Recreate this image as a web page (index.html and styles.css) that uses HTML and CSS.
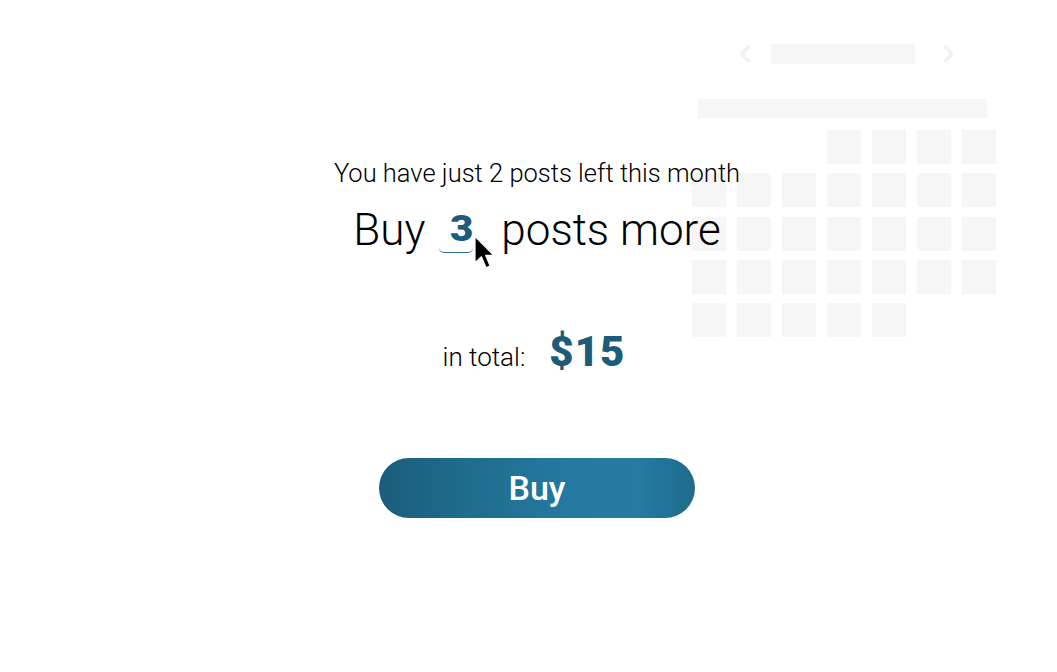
FILE: index.html
```html
<!DOCTYPE html>
<html lang="en">
<head>
<meta charset="utf-8">
<title>Buy posts</title>
<link rel="stylesheet" href="styles.css">
</head>
<body>
<div class="stage">
  <div class="calendar" aria-hidden="true">
    <div class="cal-head">
      <svg class="chev prev" viewBox="0 0 12 18" width="12" height="18"><path d="M9.5 2 L3 9 L9.5 16" fill="none" stroke="#f1f1f1" stroke-width="3.6" stroke-linecap="round" stroke-linejoin="round"/></svg>
      <div class="cal-title"></div>
      <svg class="chev next" viewBox="0 0 12 18" width="12" height="18"><path d="M2.5 2 L9 9 L2.5 16" fill="none" stroke="#f1f1f1" stroke-width="3.6" stroke-linecap="round" stroke-linejoin="round"/></svg>
    </div>
    <div class="cal-week"></div>
    <div class="cal-grid">
      <span class="cell start"></span><span class="cell"></span><span class="cell"></span><span class="cell"></span>
      <span class="cell"></span><span class="cell"></span><span class="cell"></span><span class="cell"></span><span class="cell"></span><span class="cell"></span><span class="cell"></span>
      <span class="cell"></span><span class="cell"></span><span class="cell"></span><span class="cell"></span><span class="cell"></span><span class="cell"></span><span class="cell"></span>
      <span class="cell"></span><span class="cell"></span><span class="cell"></span><span class="cell"></span><span class="cell"></span><span class="cell"></span><span class="cell"></span>
      <span class="cell"></span><span class="cell"></span><span class="cell"></span><span class="cell"></span><span class="cell"></span>
    </div>
  </div>

  <main class="offer">
    <p class="left">You have just 2 posts left this month</p>
    <p class="buy-line"><span>Buy</span><span class="qty"><span class="digit">3</span><svg class="pointer" viewBox="0 0 20 32" width="23" height="37"><path d="M1.5 1.5 V25.5 L7.2 20 L11.2 29.5 L15.2 27.8 L11.3 18.6 H18.5 Z" fill="#000" stroke="#fff" stroke-width="1.5" stroke-linejoin="round"/></svg></span><span>posts more</span></p>
    <div class="total"><span class="label">in total:</span><span class="price">$15</span></div>
    <button class="buy-btn" type="button">Buy</button>
  </main>
</div>
</body>
</html>
```

FILE: styles.css
```css
* { box-sizing: border-box; }

html, body {
  margin: 0;
  padding: 0;
  background: #fff;
}

body {
  font-family: Roboto, "Liberation Sans", Arial, sans-serif;
  color: #000;
}

.stage {
  position: relative;
  width: 1057px;
  height: 672px;
  overflow: hidden;
}

/* decorative calendar behind the content */
.calendar {
  position: absolute;
  left: 692px;
  top: 44px;
  width: 304px;
  display: flex;
  flex-direction: column;
}

.cal-head {
  height: 20px;
  display: flex;
  align-items: center;
  padding-left: 47px;
}

.chev.prev { margin-right: 20px; }
.chev.next { margin-left: 28px; }

.cal-title {
  width: 144px;
  height: 20px;
  background: #f6f6f6;
}

.cal-week {
  margin: 35px 9px 0 6px;
  height: 19px;
  background: #f6f6f6;
}

.cal-grid {
  margin-top: 12px;
  display: grid;
  grid-template-columns: repeat(7, 34px);
  grid-auto-rows: 34px;
  column-gap: 11px;
  row-gap: 9.25px;
}

.cell {
  background: #f6f6f6;
}

.cell.start {
  grid-column-start: 4;
}

/* main offer */
.offer {
  position: relative;
  display: flex;
  flex-direction: column;
  align-items: center;
  padding: 158px 0 0 17px;
}

.left {
  margin: 0;
  font-size: 25.5px;
  line-height: 30px;
  font-weight: 300;
}

.buy-line {
  margin: 18px 0 0;
  font-size: 44px;
  line-height: 48px;
  font-weight: 300;
  white-space: nowrap;
}

.qty {
  position: relative;
  display: inline-block;
  vertical-align: 4px;
  width: 34px;
  margin: 0 28px 0 14px;
  padding: 0 0 6px 11px;
  font-size: 36px;
  line-height: 34px;
  font-weight: 900;
  color: #1d5c79;
  text-align: left;
  border-bottom: 1px solid #2a7095;
  border-radius: 0 0 5px 5px;
}

.digit {
  display: inline-block;
  transform: scaleX(1.12);
  transform-origin: left center;
}

.pointer {
  position: absolute;
  left: 34px;
  top: 22px;
}

.total {
  margin: 77px 6px 0 0;
  display: flex;
  align-items: baseline;
  gap: 24px;
}

.label {
  font-size: 26px;
  line-height: 30px;
  font-weight: 300;
}

.price {
  font-size: 42px;
  line-height: 42px;
  font-weight: 900;
  color: #1d5c79;
  letter-spacing: 1px;
}

.buy-btn {
  margin-top: 85px;
  width: 316px;
  height: 60px;
  border: 0;
  border-radius: 30px;
  background: linear-gradient(90deg, #1b5d7a 0%, #1f6d8f 30%, #2479a0 60%, #257ba1 82%, #1e6b8c 100%);
  color: #fff;
  font-family: Roboto, "Liberation Sans", Arial, sans-serif;
  font-size: 34px;
  font-weight: 500;
  line-height: 60px;
  padding: 0;
  cursor: pointer;
}
```
